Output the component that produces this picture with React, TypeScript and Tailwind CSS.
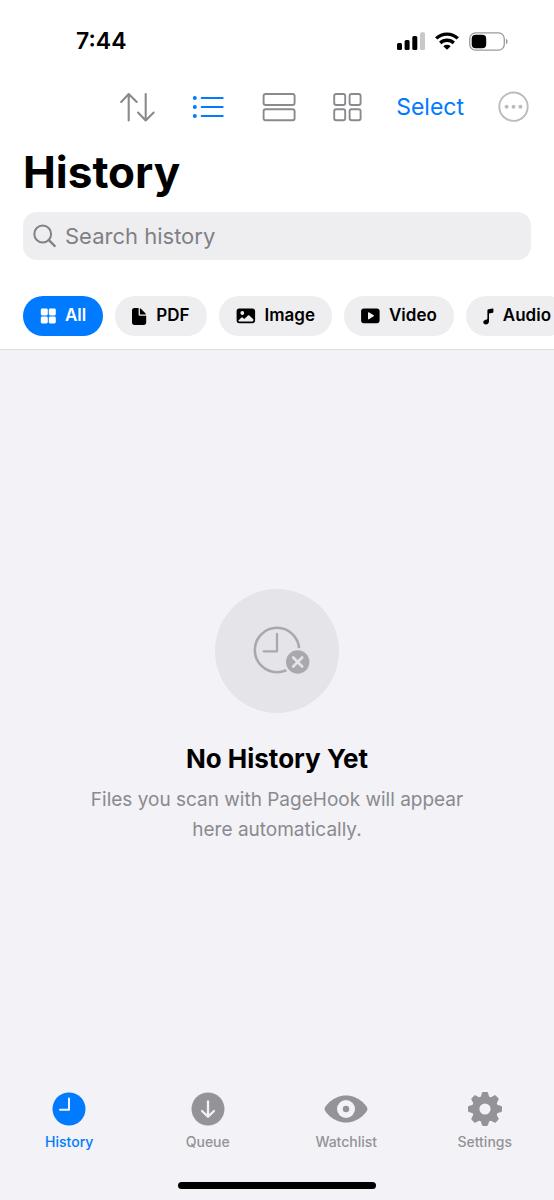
import type { ReactNode } from 'react';
import clsx from 'clsx';

interface FilterChip {
  label: string;
  icon:  ReactNode;
}

interface Tab {
  label: string;
  icon:  ReactNode;
}

/* ---------- Status bar ---------- */

function SignalIcon() {
  return (
    <svg width="28" height="18" viewBox="0 0 28 18" aria-hidden="true">
      <rect x="0" y="11" width="5" height="7" rx="1.5" />
      <rect x="7.6" y="8" width="5" height="10" rx="1.5" />
      <rect x="15.3" y="4" width="5" height="14" rx="1.5" />
      <rect x="23" y="0.3" width="5" height="17.7" rx="1.5" fill="#c8c8c8" />
    </svg>
  );
}

function WifiIcon() {
  return (
    <svg width="24" height="18" viewBox="0 0 24 18" fill="none" stroke="black" strokeWidth="3.3" aria-hidden="true">
      <path d="M1.2 6.4a15.6 15.6 0 0 1 21.6 0" />
      <path d="M5.2 11a9.8 9.8 0 0 1 13.6 0" />
      <path d="M12 17.800 8.300 14.200a5.400 5.400 0 0 1 7.400 0Z" fill="black" stroke="none" />
    </svg>
  );
}

function BatteryIcon() {
  return (
    <svg width="39" height="19" viewBox="0 0 39 19" aria-hidden="true">
      <rect x="0.7" y="0.9" width="34.6" height="17.2" rx="5.8" fill="none" stroke="#9b9b9b" strokeWidth="1.3" />
      <rect x="2.7" y="2.8" width="14.500" height="13.4" rx="4" />
      <path d="M37 6.8c2.2 1 2.2 4.4 0 5.4z" fill="#9b9b9b" />
    </svg>
  );
}

function StatusBar() {
  return (
    <div className="flex h-[82px] items-center justify-between pl-[76px] pr-[46px] text-black">
      <span className="text-[23px] leading-8 font-semibold">7:44</span>
      <div className="flex items-center gap-2.5">
        <SignalIcon />
        <WifiIcon />
        <BatteryIcon />
      </div>
    </div>
  );
}

/* ---------- Toolbar ---------- */

function Toolbar() {
  return (
    <div className="flex h-[50px] items-center justify-end gap-[34px] pr-6 text-[#8a8a8e]">
      <button type="button" aria-label="Sort">
        <svg width="36" height="32" viewBox="0 0 36 32" fill="none" stroke="currentColor" strokeWidth="2.1" strokeLinecap="round" strokeLinejoin="round">
          <path d="M8.7 29.4V3M1.2 11 8.7 3l8 8" />
          <path d="M25.7 3v26.4M18 21.6l7.7 7.8 8-7.8" />
        </svg>
      </button>

      <button type="button" aria-label="List view" className="text-[#007aff]">
        <svg width="36" height="32" viewBox="0 0 36 32" fill="none" stroke="currentColor" strokeWidth="2" strokeLinecap="round">
          <path d="M11.7 7h21M11.7 16h21M11.7 25h21" />
          <g fill="currentColor" stroke="none">
            <circle cx="4.8" cy="7" r="2" />
            <circle cx="4.8" cy="16" r="2" />
            <circle cx="4.8" cy="25" r="2" />
          </g>
        </svg>
      </button>

      <button type="button" aria-label="Card view">
        <svg width="36" height="32" viewBox="0 0 36 32" fill="none" stroke="currentColor" strokeWidth="1.9">
          <rect x="3.6" y="3" width="31" height="11" rx="2" />
          <rect x="3.6" y="18.2" width="31" height="11" rx="2" />
        </svg>
      </button>

      <button type="button" aria-label="Grid view">
        <svg width="32" height="32" viewBox="0 0 32 32" fill="none" stroke="currentColor" strokeWidth="1.9">
          <rect x="4.2" y="3" width="11" height="11" rx="2" />
          <rect x="19.6" y="3" width="11" height="11" rx="2" />
          <rect x="4.2" y="18.2" width="11" height="11" rx="2" />
          <rect x="19.6" y="18.2" width="11" height="11" rx="2" />
        </svg>
      </button>

      <button type="button" className="text-[23px] leading-8 text-[#007aff]">Select</button>

      <button type="button" aria-label="More" className="text-[#bcbcc0]">
        <svg width="32" height="32" viewBox="0 0 32 32">
          <circle cx="15.5" cy="15.7" r="14.2" fill="none" stroke="currentColor" strokeWidth="1.9" />
          <g fill="currentColor">
            <circle cx="8.6" cy="15.7" r="2" />
            <circle cx="15.5" cy="15.7" r="2" />
            <circle cx="22.4" cy="15.7" r="2" />
          </g>
        </svg>
      </button>
    </div>
  );
}

/* ---------- Search ---------- */

function SearchBox() {
  return (
    <label className="mt-4 mr-[23px] ml-[23px] flex h-12 items-center gap-2 rounded-[14px] bg-[#eeeef0] px-2.5">
      <svg width="24" height="24" viewBox="0 0 24 24" fill="none" stroke="#808085" strokeWidth="2" strokeLinecap="round" aria-hidden="true">
        <circle cx="9.7" cy="10" r="8.4" />
        <path d="m15.9 16.2 5.8 5.8" strokeWidth="2.4" />
      </svg>
      <input
        type="text"
        aria-label="Search history"
        placeholder="Search history"
        className="h-10 min-w-0 flex-1 bg-transparent text-[22px] leading-8 text-black outline-none placeholder:text-[#808085]"
      />
    </label>
  );
}

/* ---------- Filter chips ---------- */

const CHIPS: FilterChip[] = [
  {
    label: 'All',
    icon: (
      <svg width="16" height="16" viewBox="0 0 16 16" fill="currentColor">
        <rect x="0.8" y="0.5" width="7" height="7" rx="1.4" />
        <rect x="8.800" y="0.5" width="7" height="7" rx="1.4" />
        <rect x="0.8" y="8.5" width="7" height="7" rx="1.4" />
        <rect x="8.800" y="8.5" width="7" height="7" rx="1.4" />
      </svg>
    ),
  },
  {
    label: 'PDF',
    icon: (
      <svg width="15" height="17" viewBox="0 0 15 17" fill="currentColor">
        <path d="M2.4 0H6.6v6.2c0 1 .6 1.6 1.6 1.6H14.2v6.8c0 1.5-.9 2.4-2.4 2.4H2.4C.9 17 0 16.1 0 14.6V2.4C0 .9.9 0 2.4 0Z" />
        <path d="M7.9.2c.4.1.8.4 1.2.8l4 4.1c.4.4.7.8.8 1.3H8.4c-.3 0-.5-.2-.5-.5Z" />
      </svg>
    ),
  },
  {
    label: 'Image',
    icon: (
      <svg width="20" height="16" viewBox="0 0 20 16" fill="currentColor">
        <path
          fillRule="evenodd"
          d="M3.300.4h13.100c1.700 0 2.700 1 2.700 2.600v9.600c0 1.700-1 2.600-2.700 2.600H3.300c-1.700 0-2.700-.9-2.700-2.600V3C.6 1.400 1.600.4 3.300.4Zm3 2.700a1.900 1.900 0 1 0 0 3.800 1.900 1.900 0 0 0 0-3.800ZM2.400 12.500v.3c0 .5.4.8.9.8h13.100c.5 0 .9-.3.9-.8v-1.600l-3.700-3.500c-.6-.5-1.300-.5-1.900 0l-3.500 3.200-1.200-1.100c-.6-.5-1.200-.5-1.800 0Z"
        />
      </svg>
    ),
  },
  {
    label: 'Video',
    icon: (
      <svg width="19" height="16" viewBox="0 0 19 16" fill="currentColor">
        <path
          fillRule="evenodd"
          d="M2.800.4h13.100c1.700 0 2.700 1 2.700 2.600v9.600c0 1.700-1 2.600-2.700 2.600H2.800c-1.700 0-2.700-.9-2.700-2.600V3C.1 1.400 1.100.4 2.800.4ZM7 4.800v6c0 .5.5.7.9.5l4.800-3c.4-.2.4-.8 0-1l-4.800-3c-.4-.2-.9 0-.9.5Z"
        />
      </svg>
    ),
  },
  {
    label: 'Audio',
    icon: (
      <svg width="11" height="17" viewBox="0 0 11 17" fill="currentColor">
        <path d="M10.400 1v3c0 .4-.2.6-.6.700L6 5.500v7.700c0 2-1.200 3.200-3.100 3.200-1.600 0-2.600-.900-2.600-2.200 0-1.300.8-2.100 2.400-2.500l1-.2c.5-.1.700-.4.700-.9V2.700c0-.8.3-1.200 1.100-1.400L9.600.4c.5-.1.800.1.800.6Z" />
      </svg>
    ),
  },
];

function FilterChips({ active }: { active: string }) {
  return (
    <div className="mt-9 flex gap-3 overflow-x-auto pb-[13px] pl-[23px] [scrollbar-width:none]">
      {CHIPS.map((chip) => (
        <button
          key={chip.label}
          type="button"
          aria-pressed={chip.label === active}
          className={clsx(
            'flex h-10 shrink-0 items-center gap-[9px] rounded-full px-[17px] text-[17px] font-semibold',
            chip.label === active ? 'bg-[#007aff] text-white' : 'bg-[#eeeef0] text-black',
          )}
        >
          {chip.icon}
          {chip.label}
        </button>
      ))}
    </div>
  );
}

/* ---------- Empty state ---------- */

function EmptyState() {
  return (
    <main className="flex flex-1 flex-col items-center justify-center px-16 text-center">
      <div className="flex size-[124px] items-center justify-center rounded-full bg-[#e4e4e9]">
        <svg width="68" height="68" viewBox="0 0 68 68" fill="none" aria-hidden="true">
          <circle cx="34" cy="33" r="22.200" stroke="#a9a9ad" strokeWidth="2.600" />
          <path d="M34 17v17.300H20.700" stroke="#a9a9ad" strokeWidth="2.300" strokeLinecap="round" strokeLinejoin="round" />
          {/* Badge, with a halo that cuts into the clock face */}
          <circle cx="54.700" cy="45" r="14" fill="#e4e4e9" />
          <circle cx="54.700" cy="45" r="11.700" fill="#a9a9ad" />
          <path d="m50.200 40.500 9 9M59.200 40.500l-9 9" stroke="#e4e4e9" strokeWidth="2.600" strokeLinecap="round" />
        </svg>
      </div>
      <h2 className="mt-7 text-[26px] leading-9 font-bold text-black">No History Yet</h2>
      <p className="mt-2 max-w-[400px] text-[19px] leading-[30px] text-[#8a8a8e]">
        Files you scan with PageHook will appear here automatically.
      </p>
    </main>
  );
}

/* ---------- Tab bar ---------- */

const TEETH = [0, 45, 90, 135, 180, 225, 270, 315];

const TABS: Tab[] = [
  {
    label: 'History',
    icon: (
      <svg width="34" height="34" viewBox="0 0 34 34">
        <circle cx="17" cy="17" r="16.500" fill="currentColor" />
        <path d="M17 6.500v11.300H8" fill="none" stroke="#f2f2f7" strokeWidth="2" strokeLinecap="round" strokeLinejoin="round" />
      </svg>
    ),
  },
  {
    label: 'Queue',
    icon: (
      <svg width="34" height="34" viewBox="0 0 34 34">
        <circle cx="17" cy="17" r="16.500" fill="currentColor" />
        <path d="M17 9.500v15M11 19l6 5.700 6-5.700" fill="none" stroke="#f2f2f7" strokeWidth="2.300" strokeLinecap="round" strokeLinejoin="round" />
      </svg>
    ),
  },
  {
    label: 'Watchlist',
    icon: (
      <svg width="44" height="34" viewBox="0 0 44 34">
        <path d="M.5 17C.5 14.500 9 3.500 22 3.500S43.500 14.500 43.500 17 35 30.500 22 30.500.5 19.500.5 17Z" fill="currentColor" />
        <circle cx="22" cy="17" r="9" fill="#f2f2f7" />
        <circle cx="22" cy="17" r="3.200" fill="currentColor" />
      </svg>
    ),
  },
  {
    label: 'Settings',
    icon: (
      <svg width="34" height="34" viewBox="0 0 34 34">
        <circle cx="17" cy="17" r="9.300" fill="none" stroke="currentColor" strokeWidth="7.400" />
        {TEETH.map((deg) => (
          <path
            key={deg}
            d="M12.500 6 13.800 1.400C14 .5 14.500 0 15.400 0h3.200c.9 0 1.400.5 1.600 1.400L21.500 6Z"
            transform={`rotate(${deg} 17 17)`}
            fill="currentColor"
          />
        ))}
      </svg>
    ),
  },
];

function TabBar({ active }: { active: string }) {
  return (
    <nav className="grid grid-cols-4 pt-2">
      {TABS.map((tab) => (
        <button
          key={tab.label}
          type="button"
          aria-current={tab.label === active ? 'page' : undefined}
          className={clsx(
            'flex flex-col items-center gap-1.5 text-sm font-medium',
            tab.label === active ? 'text-[#007aff]' : 'text-[#939398]',
          )}
        >
          {tab.icon}
          {tab.label}
        </button>
      ))}
    </nav>
  );
}

export default function App() {
  return (
    <div className="flex min-h-screen flex-col bg-[#f2f2f7] font-[Inter,sans-serif]">
      <header className="border-b border-[#dcdcdf] bg-white">
        <StatusBar />
        <Toolbar />
        <h1 className="mt-4 px-[23px] text-[44px] leading-[48px] font-bold text-black">History</h1>
        <SearchBox />
        <FilterChips active="All" />
      </header>

      <EmptyState />

      <TabBar active="History" />
      <div className="flex justify-center pt-[30px] pb-[11px]">
        <div className="h-[7px] w-[198px] rounded-full bg-black" />
      </div>
    </div>
  );
}
